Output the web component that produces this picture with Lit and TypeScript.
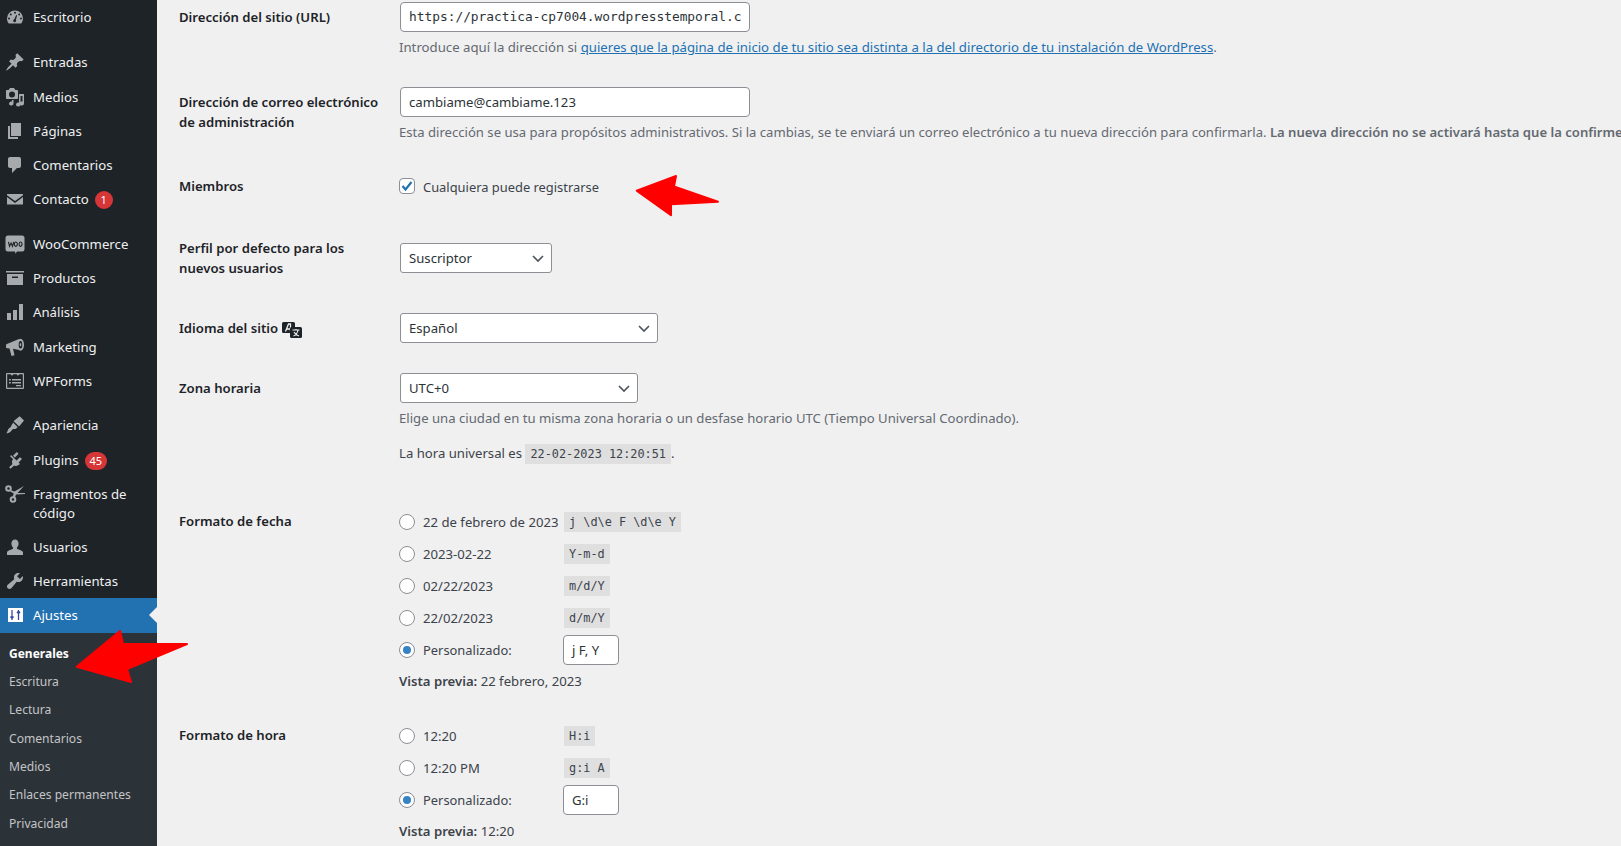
import { LitElement, html, css, svg } from "lit";
import { customElement } from "lit/decorators.js";

const ic: Record<string, any> = {
  dash: svg`<path d="M3.760 16.500h12.480A7.960 7.960 0 0 0 18 11.500a8 8 0 0 0-16 0c0 1.900.660 3.630 1.760 5zM10 4.800a1 1 0 1 1 0 2 1 1 0 0 1 0-2zM5.800 6.500a1 1 0 1 1 0 2 1 1 0 0 1 0-2zm8.400 0a1 1 0 1 1 0 2 1 1 0 0 1 0-2zM4 10.500a1 1 0 1 1 0 2 1 1 0 0 1 0-2zm12 0a1 1 0 1 1 0 2 1 1 0 0 1 0-2zm-4.800-2.500.9.400L10.900 12.800a1.500 1.500 0 1 1-1.600-.600z" fill-rule="evenodd"/>`,
  pin: svg`<path d="M10.440 3.020l1.820-1.820 6.360 6.350-1.830 1.820c-1.050-.680-2.480-.570-3.410.360l-.750.750c-.920.930-1.040 2.350-.350 3.410l-1.830 1.820-2.410-2.410-2.800 2.790c-.420.420-3.380 2.710-3.800 2.290s1.860-3.390 2.280-3.810l2.790-2.790L4.100 9.360l1.830-1.820c1.050.690 2.480.570 3.400-.360l.750-.750c.930-.920 1.050-2.350.360-3.410z"/>`,
  media: svg`<path d="M13 11V4c0-.550-.450-1-1-1h-1.670L9 1H5L3.670 3H2c-.550 0-1 .450-1 1v7c0 .550.450 1 1 1h10c.550 0 1-.450 1-1zM7 4.500a3 3 0 1 1 0 6 3 3 0 0 1 0-6z" fill-rule="evenodd"/><path d="M14 7h5v9.500a2.200 2 0 1 1-1.500-1.900V9h-2v8.500a2.200 2 0 1 1-1.500-1.900zM8.500 13v3.500a2.200 2 0 1 1-1.500-1.900V13z"/>`,
  page: svg`<path d="M6 15V2h10v13H6zm-1 1h8v2H3V5h2v11z"/>`,
  comment: svg`<path d="M5 2h9c1.100 0 2 .900 2 2v7c0 1.100-.900 2-2 2h-2l-5 5v-5H5c-1.100 0-2-.900-2-2V4c0-1.100.900-2 2-2z"/>`,
  mail: svg`<path d="M2 5h16v1.200L10 12 2 6.200zM2 8l8 6 8-6v7.500H2z"/>`,
  woo: svg`<path d="M3 1.500h14A2.500 2.500 0 0 1 19.500 4v11a2.500 2.500 0 0 1-2.500 2.500h-5l-1.500 2.200L10 17.500H3A2.500 2.500 0 0 1 .500 15V4A2.500 2.500 0 0 1 3 1.500z"/><path d="M3.500 7.800l1 4.500 1.600-3.200 1.400 3.200 1.200-4.500M10.800 8a1.500 2.200 0 1 0 .1 0zM15.500 8a1.500 2.200 0 1 0 .1 0z" fill="none" stroke="#1d2327" stroke-width="1.100"/>`,
  box: svg`<path d="M1 3h18v1.500H1zM2 6h16v11H2zM7 8.500v1.500h6V8.500z" fill-rule="evenodd"/>`,
  chart: svg`<path d="M2 11h4v7H2zM8 8h4v10H8zM14 2h4v16h-4z"/>`,
  mega: svg`<path d="M1 8.500c0-1 .500-1.500 1.500-1.700L14 2l2 11-4.500-.500-3.500-.700 1.500 6.500-3 .700-2-7.500-1.500-.300C1.500 11.500 1 11 1 10z"/><ellipse cx="15.500" cy="7.700" rx="3.500" ry="6"/><ellipse cx="15.500" cy="7.700" rx="1.800" ry="3.800" fill="#1d2327"/><ellipse cx="15.500" cy="7.700" rx=".800" ry="1.600"/>`,
  forms: svg`<path d="M2 2h16a1 1 0 0 1 1 1v14a1 1 0 0 1-1 1H2a1 1 0 0 1-1-1V3a1 1 0 0 1 1-1zm.200 1.200v13.600h15.600V3.200h-3.300L13 4.800 11.500 3.200h-3L7 4.800 5.500 3.200zM4 8h1.800v1.400H4zm3 0h9v1.400H7zm-3 3h1.800v1.400H4zm3 0h9v1.400H7zm4 3h5v1.300h-5z" fill-rule="evenodd"/>`,
  brush: svg`<path d="M14.480 11.060L19 5.600 14.700 1.300 9 5.800c-.300.200-.300.500-.100.800l4.700 4.500c.300.300.600.200.880-.040zM8 7.500l4.600 4.500c-.400.500-1.200 1.400-1.800 1.700-1 .500-2.200.100-3 .600-1 .600-1.500 1.800-2.500 2.700-1 .800-3.100 1.400-3.900 1.400 1-1.500 1.200-2.500 1.500-3.300.500-1.500 1.800-2.100 2.700-3 .800-.900 1-2 1.600-3 .300-.600.900-1.200 1.800-1.600z"/>`,
  plug: svg`<path d="M13.110 4.360L9.870 7.600 8 5.730l3.240-3.240c.350-.340 1.050-.200 1.560.320.520.510.660 1.210.310 1.550zm-8 1.770l.910-1.120 9.010 9.010-1.190.840c-1.300 1.300-3.300 1.500-4.800.600l-3.400 3.400-1.500-1.500 3.400-3.400c-.900-1.500-.700-3.500.570-4.830zm11.400 3.300L13.270 12.700l-1.870-1.870 3.240-3.240c.340-.350 1.040-.210 1.550.310.520.510.660 1.210.320 1.530z"/>`,
  scissors: svg`<g fill="none" stroke="#a7aaad" stroke-width="2"><circle cx="3.500" cy="4.500" r="2.300"/><circle cx="8" cy="15.500" r="2.300"/></g><path d="M5 6L9.500 7.500 19 2l-6.500 7L20 9v1l-9 .500-1 3-2.300-.700 1-3.300L4.200 6.800z"/>`,
  user: svg`<path d="M10 2.500c2.200 0 3.600 1.800 3.600 4 0 1.500-.600 3-1.500 3.900-.300.300-.300 1.200.300 1.600 1.300.800 5.600 1.400 5.600 3.500V18H2v-2.500c0-2.100 4.300-2.700 5.600-3.500.600-.400.600-1.300.300-1.600-.900-.900-1.500-2.400-1.500-3.900 0-2.200 1.400-4 3.600-4z"/>`,
  wrench: svg`<path d="M16.680 9.770c-1.340 1.340-3.300 1.670-4.950.990l-5.410 6.520c-.990.990-2.590.990-3.580 0s-.990-2.590 0-3.580l6.520-5.420c-.680-1.650-.350-3.610.990-4.950 1.280-1.280 3.120-1.620 4.720-1.060l-2.890 2.890 2.820 2.820 2.860-2.870c.530 1.580.180 3.390-1.080 4.660z"/>`,
};

const g2 = [["pin", "Entradas"], ["media", "Medios"], ["page", "Páginas"], ["comment", "Comentarios"], ["mail", "Contacto", "1"]];
const g3 = [["woo", "WooCommerce"], ["box", "Productos"], ["chart", "Análisis"], ["mega", "Marketing"], ["forms", "WPForms"]];
const g4 = [["brush", "Apariencia"], ["plug", "Plugins", "45"], ["scissors", "Fragmentos de código"], ["user", "Usuarios"], ["wrench", "Herramientas"]];
const subs = ["Generales", "Escritura", "Lectura", "Comentarios", "Medios", "Enlaces permanentes", "Privacidad"];

@customElement("app-root")
export class AppRoot extends LitElement {
  static styles = css`
    :host { display: block; width: 1621px; height: 846px; overflow: hidden; position: relative; background: #f0f0f1;
      font-family: "Noto Sans", "Open Sans", sans-serif; font-size: 13.150px; color: #1d2327; }
    * { box-sizing: border-box; }
    .layout { display: flex; height: 846px; }
    .side { width: 157px; flex: none; background: #1d2327; color: #f0f0f1; overflow: hidden; font-size: 13.200px; }
    .group { padding-bottom: 10px; }
    .group.first { padding-bottom: 11px; }
    .item { display: flex; align-items: flex-start; min-height: 34.300px; padding: 8px 8px 0 33px; line-height: 19px; position: relative; }
    .item.two { min-height: 53px; }
    .item svg { position: absolute; left: 5px; top: 7px; width: 20px; height: 20px; fill: #a7aaad; }
    .badge { background: #d63638; color: #fff; border-radius: 9px; height: 18px; min-width: 18px; padding: 0 5px; font-size: 11px; line-height: 18px; text-align: center; margin-left: 6px; margin-top: 1px; }
    .active { background: #2271b1; color: #fff; height: 34.300px; }
    .active::after { content: ""; position: absolute; right: 0; top: 9px; border: 8px solid transparent; border-right-color: #f0f0f1; border-left-width: 0; }
    .subs { background: #2c3338; padding: 7px 0 0 9px; height: 300px; }
    .sub { height: 28.350px; line-height: 28px; font-size: 12.100px; color: #c3c4c7; }
    .sub.cur { color: #fff; font-weight: 700; font-size: 12px; }
    .main { flex: 1; padding-left: 22px; padding-top: 2px; min-width: 0; }
    .row { display: flex; }
    .lab { width: 221px; flex: none; font-weight: 600; line-height: 19.500px; padding-right: 20px; }
    .field { min-width: 0; flex: 1; white-space: nowrap; }
    .input { height: 30px; background: #fff; border: 1px solid #8c8f94; border-radius: 4px; padding: 0 8px; line-height: 28px; color: #2c3338; white-space: nowrap; }
    .clip { display: block; overflow: hidden; }
    .url { width: 350px; font-family: "DejaVu Sans Mono", monospace; font-size: 12.850px; }
    .mail { width: 350px; }
    .select { height: 30px; background: #fff; border: 1px solid #8c8f94; border-radius: 3px; padding: 0 8px; line-height: 28px; color: #2c3338; position: relative; }
    .select svg { position: absolute; right: 6px; top: 7px; width: 14px; height: 14px; fill: none; stroke: #50575e; stroke-width: 1.700; }
    .desc { color: #646970; line-height: 19px; margin-top: 6px; margin-left: -1px; }
    .desc.wide { font-size: 13.200px; }
    .desc.tight { font-size: 13.100px; }
    .desc a { color: #2271b1; text-decoration: underline; }
    .desc b { font-weight: 600; }
    .now { margin-top: 16px; color: #3c434a; }
    .box { width: 16px; height: 16px; background: #fff; border: 1px solid #8c8f94; border-radius: 4px; flex: none; position: relative; margin-left: -1px; }
    .box svg { position: absolute; left: -1px; top: -1px; width: 16px; height: 16px; fill: none; stroke: #2271b1; stroke-width: 2.200; }
    .radio { width: 16px; height: 16px; background: #fff; border: 1px solid #8c8f94; border-radius: 50%; flex: none; display: flex; align-items: center; justify-content: center; margin-left: -1px; }
    .radio.on::after { content: ""; width: 8px; height: 8px; border-radius: 50%; background: #3582c4; }
    .check { display: flex; align-items: center; gap: 8px; color: #3c434a; height: 20px; margin-top: 4px; font-size: 12.900px; }
    .check span.txt { padding-top: 2px; }
    code { display: inline-block; font-family: "DejaVu Sans Mono", monospace; font-size: 11.850px; background: rgba(0,0,0,.07); padding: 0 5px; height: 20px; line-height: 20px; color: #3c434a; }
    .ropt { display: flex; align-items: center; height: 32px; color: #3c434a; }
    .ropt .t { margin-left: 8px; width: 141px; white-space: nowrap; }
    .ropt .t.custom { font-size: 12.900px; width: 140px; }
    .small { width: 56px; height: 30px; }
    .prev { color: #3c434a; line-height: 20px; margin-top: 5px; margin-left: -1px; }
    .prev b { font-weight: 600; }
    .arrow { position: absolute; fill: #f00; stroke: #f00; stroke-width: 2; stroke-linejoin: round; pointer-events: none; }
    .tr { display: inline-block; vertical-align: -5px; width: 20px; height: 16px; margin-left: 1px; }
    .r1 { height: 85px; }
    .r2 { height: 85px; }
    .r3 { height: 67px; }
    .r4 { height: 70px; }
    .r5 { height: 60px; }
    .r6 { height: 137px; }
    .r7 { height: 214px; }
    .p0 { padding-top: 0; }
    .p4 { padding-top: 4px; }
    .p5 { padding-top: 5px; }
    .p6 { padding-top: 6px; }
    .p10 { padding-top: 10px; }
    .w152 { width: 152px; }
    .w258 { width: 258px; }
    .w238 { width: 238px; }
    .a1 { left: 630px; top: 170px; }
    .a2 { left: 70px; top: 625px; }
  `;

  private renderItem(i: string[]) {
    const two = i[1].length > 15;
    return html`<div class="item ${two ? "two" : ""}">
      <svg viewBox="0 0 20 20">${ic[i[0]]}</svg>
      <span>${i[1]}</span>
      ${i[2] ? html`<span class="badge">${i[2]}</span>` : ""}
    </div>`;
  }

  private radio(label: string, code: string) {
    return html`<div class="ropt">
      <span class="radio"></span>
      <span class="t">${label}</span>
      <code>${code}</code>
    </div>`;
  }

  private custom(v: string) {
    return html`<div class="ropt"><span class="radio on"></span><span class="t custom">Personalizado:</span><div class="input small">${v}</div></div>`;
  }

  private chevron() {
    return html`<svg viewBox="0 0 14 14"><path d="M2 5l5 5 5-5"/></svg>`;
  }

  render() {
    return html`
      <div class="layout">
        <nav class="side">
          <div class="group first">${this.renderItem(["dash", "Escritorio"])}</div>
          <div class="group">${g2.map((i) => this.renderItem(i))}</div>
          <div class="group">${g3.map((i) => this.renderItem(i))}</div>
          <div>${g4.map((i) => this.renderItem(i))}</div>
          <div class="item active">
            <svg viewBox="0 0 20 20"><rect x="3" y="3" width="15" height="14" fill="#fff"/><path d="M7 5v10M13.500 5v10M5.500 11.500L7 13.500l1.500-2M12 8l1.500-2L15 8" fill="none" stroke="#3a4a9a" stroke-width="1.300"/></svg>
            <span>Ajustes</span>
          </div>
          <div class="subs">${subs.map((s, n) => html`<div class="sub ${n === 0 ? "cur" : ""}">${s}</div>`)}</div>
        </nav>
        <main class="main">
          <div class="row r1">
            <div class="lab p6">Dirección del sitio (URL)</div>
            <div class="field">
              <div class="input url"><span class="clip">https://practica-cp7004.wordpresstemporal.com</span></div>
              <div class="desc wide">Introduce aquí la dirección si <a>quieres que la página de inicio de tu sitio sea distinta a la del directorio de tu instalación de WordPress</a>.</div>
            </div>
          </div>
          <div class="row r2">
            <div class="lab p6">Dirección de correo electrónico de administración</div>
            <div class="field">
              <div class="input mail">cambiame@cambiame.123</div>
              <div class="desc tight">Esta dirección se usa para propósitos administrativos. Si la cambias, se te enviará un correo electrónico a tu nueva dirección para confirmarla. <b>La nueva dirección no se activará hasta que la confirmes.</b></div>
            </div>
          </div>
          <div class="row r3">
            <div class="lab p5">Miembros</div>
            <div class="field"><div class="check">
              <span class="box"><svg viewBox="0 0 16 16"><path d="M3.500 8l3 3.500 6-7.500"/></svg></span>
              <span class="txt">Cualquiera puede registrarse</span>
            </div></div>
          </div>
          <div class="row r4">
            <div class="lab p0">Perfil por defecto para los nuevos usuarios</div>
            <div class="field p4"><div class="select w152">Suscriptor${this.chevron()}</div></div>
          </div>
          <div class="row r5">
            <div class="lab p10">Idioma del sitio <svg class="tr" viewBox="0 0 20 16"><path d="M1.500 0h10A1.500 1.500 0 0 1 13 1.500V11H1.500A1.500 1.500 0 0 1 0 9.500v-8A1.500 1.500 0 0 1 1.500 0z" fill="#1d2327"/><path d="M3.500 9.500l3-7.500h2v7.500M5 7h3.500" stroke="#f0f0f1" fill="none" stroke-width="1.300"/><rect x="8" y="5" width="12" height="11" rx="1.500" fill="#1d2327"/><path d="M10.500 8h7M14 7v1M11.500 14c2.500-1 4-3 4.500-6M12 10c.8 1.800 2.200 3 5 4" stroke="#f0f0f1" fill="none" stroke-width="1.100"/></svg></div>
            <div class="field p4"><div class="select w258">Español${this.chevron()}</div></div>
          </div>
          <div class="row r6">
            <div class="lab p10">Zona horaria</div>
            <div class="field p4">
              <div class="select w238">UTC+0${this.chevron()}</div>
              <div class="desc">Elige una ciudad en tu misma zona horaria o un desfase horario UTC (Tiempo Universal Coordinado).</div>
              <div class="desc now">La hora universal es <code>22-02-2023 12:20:51</code>.</div>
            </div>
          </div>
          <div class="row r7">
            <div class="lab p6">Formato de fecha</div>
            <div class="field">
              ${this.radio("22 de febrero de 2023", "j \\d\\e F \\d\\e Y")}
              ${this.radio("2023-02-22", "Y-m-d")}
              ${this.radio("02/22/2023", "m/d/Y")}
              ${this.radio("22/02/2023", "d/m/Y")}
              ${this.custom("j F, Y")}
              <div class="prev"><b>Vista previa:</b> 22 febrero, 2023</div>
            </div>
          </div>
          <div class="row">
            <div class="lab p6">Formato de hora</div>
            <div class="field">
              ${this.radio("12:20", "H:i")}
              ${this.radio("12:20 PM", "g:i A")}
              ${this.custom("G:i")}
              <div class="prev"><b>Vista previa:</b> 12:20</div>
            </div>
          </div>
        </main>
      </div>
      <svg class="arrow a1" width="95" height="52" viewBox="0 0 95 52"><path d="M6.700 20.700L46 6l-2 10.500L88 31.700l-47 2.500 0 11z"/></svg>
      <svg class="arrow a2" width="125" height="62" viewBox="0 0 125 62"><path d="M6.700 41.700L50 6l3 13 64 0-60 25 4 13z"/></svg>
    `;
  }
}
